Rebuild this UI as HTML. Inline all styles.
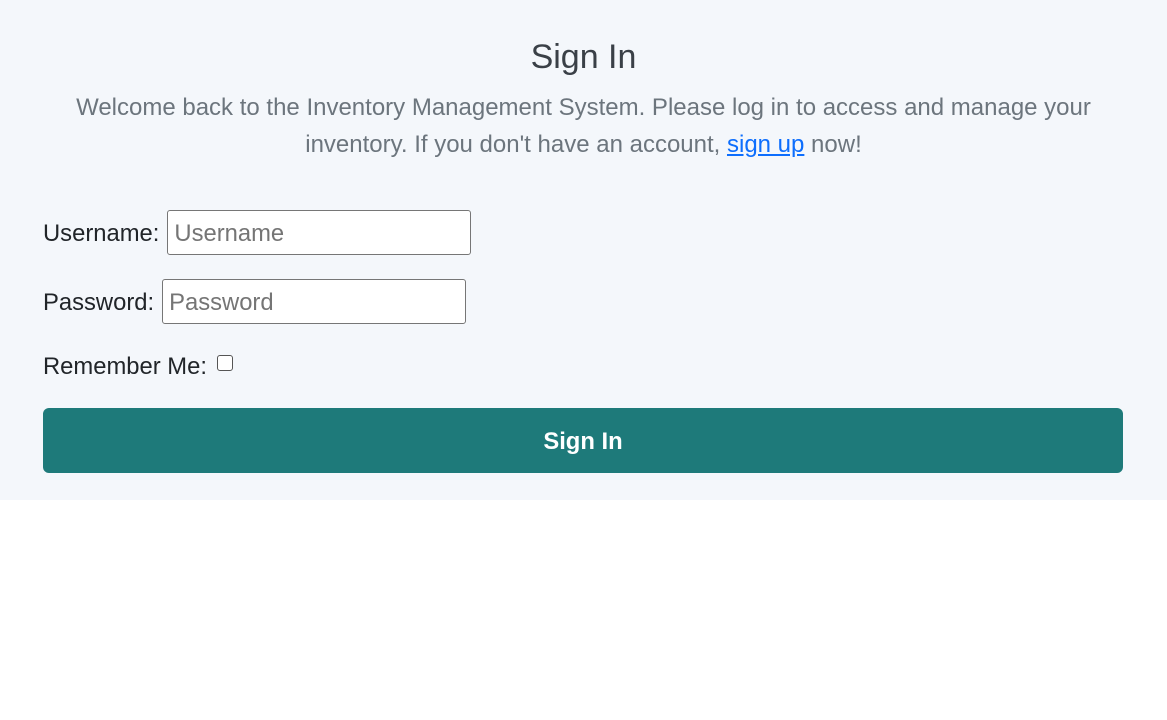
<!DOCTYPE html>
<html><head><meta charset="utf-8"><style>
html,body{margin:0;padding:0;background:#fff;font-family:"Liberation Sans",Arial,sans-serif;}
.wrap{background:#f4f7fb;height:500px;position:relative;width:1167px;}
h1{position:absolute;top:35px;left:0;width:1167px;text-align:center;margin:0;font-weight:normal;font-size:34px;color:#3a4047;line-height:44px;}
p{position:absolute;top:90px;left:40px;width:1087px;margin:0;text-align:center;font-size:24px;line-height:36.5px;color:#6c757d;}
p a{color:#0d6efd;}
.row{position:absolute;left:43px;font-size:23.8px;color:#212529;display:flex;align-items:center;}
.row span{position:relative;top:1px;}
.inp{box-sizing:border-box;height:45px;border:1px solid #767676;border-radius:3px;background:#fff;color:#757575;font-size:23.8px;padding-left:6px;padding-top:2px;display:flex;align-items:center;margin-left:8px;}
.cb{width:16px;height:16px;box-sizing:border-box;border:1.5px solid #555;border-radius:3px;background:#fff;margin-left:10px;margin-top:-6px;}
.btn{position:absolute;left:43px;top:408px;width:1080px;height:65px;background:#1e7a7a;border-radius:6px;color:#fff;font-weight:bold;font-size:23.8px;text-align:center;line-height:67px;}
</style></head><body>
<div class="wrap">
<h1>Sign In</h1>
<p>Welcome back to the Inventory Management System. Please log in to access and manage your inventory. If you don't have an account, <a href="#">sign up</a> now!</p>
<div class="row" style="top:210px"><span>Username:</span><div class="inp" style="width:304px">Username</div></div>
<div class="row" style="top:279px"><span>Password:</span><div class="inp" style="width:304px">Password</div></div>
<div class="row" style="top:352px;height:28px"><span>Remember Me:</span><div class="cb"></div></div>
<div class="btn">Sign In</div>
</div>
</body></html>
